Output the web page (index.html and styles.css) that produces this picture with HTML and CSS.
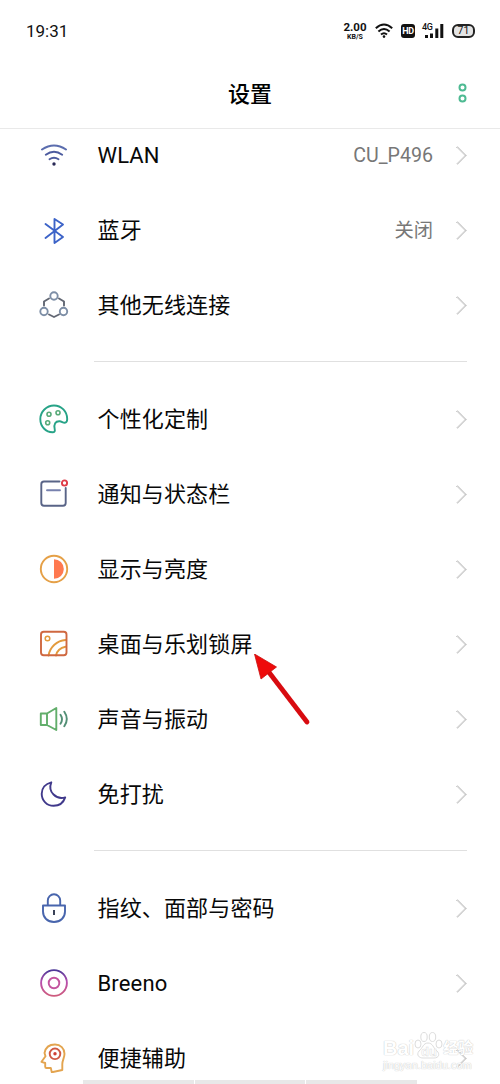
FILE: index.html
```html
<!DOCTYPE html>
<html lang="zh-CN">
<head>
<meta charset="utf-8">
<title>设置</title>
<link rel="stylesheet" href="styles.css">
</head>
<body>
<div class="phone">
  <div class="status">
    <span class="clock">19:31</span>
    <div class="speed"><b>2.00</b><small>KB/S</small></div>
    <svg class="s-wifi" width="18" height="16" viewBox="0 0 18 16" fill="none" stroke="#111" stroke-width="2"><path d="M.8 5.3Q9-2.2 17.2 5.3M3.4 8.6Q9 3.4 14.6 8.6M6 11.6Q9 9 12 11.6"/><circle cx="9" cy="13.6" r="1.3" fill="#111" stroke="none"/></svg>
    <span class="hd">HD</span>
    <div class="signal"><span>4G</span><svg width="21" height="15" viewBox="0 0 21 15" fill="#111"><path d="M2 12h3v3H2zM7 10.500h3v4.500H7zM12.300 5.500h3V15h-3zM17.300 1h3v14h-3z"/></svg></div>
    <span class="battery">71</span>
  </div>
  <header class="header">
    <h1>设置</h1>
    <svg class="more" width="10" height="20" viewBox="0 0 10 20" fill="none" stroke="#4dba92" stroke-width="2"><circle cx="5.500" cy="4.500" r="3"/><circle cx="5.500" cy="15.500" r="3"/></svg>
  </header>
  <main class="list">
    <section class="group">
      <div class="row"><svg class="icon" viewBox="0 0 30 30" stroke="#5b6dae"><path d="M3 8.500Q15 .5 27 8.500" stroke-width="2"/><path d="M6.800 13.700Q15 7.700 23.200 13.700M10.500 18.300Q15 15.300 19.500 18.300" stroke="#4c5b9f"/><circle cx="15" cy="23" r="1.700" fill="#292956" stroke="none"/></svg><span class="label">WLAN</span><span class="value">CU_P496</span><i class="arrow"></i></div>
      <div class="row"><svg class="icon" viewBox="0 0 30 30" stroke="#3c63c8"><path d="M6.500 8l17.500 13-8.500 6V3L24 8.500 6.500 22"/></svg><span class="label">蓝牙</span><span class="value zh">关闭</span><i class="arrow"></i></div>
      <div class="row"><svg class="icon" viewBox="0 0 30 30" stroke="#7d8ea6"><circle cx="15" cy="5" r="3.700"/><circle cx="5" cy="20.500" r="3.700"/><circle cx="24.500" cy="20.500" r="3.700"/><path d="M10 7.500l-5 3v4M20 7.500l5 3v4M10 23.500l5 2.500 5-2.500" stroke="#626773"/></svg><span class="label">其他无线连接</span><i class="arrow"></i></div>
    </section>
    <hr class="divider">
    <section class="group raised">
      <div class="row"><svg class="icon" viewBox="0 0 30 30" stroke="#27a387"><path d="M28.200 15C28.200 7.500 22.400 1.500 15 1.500S1.300 7.600 1.300 15c0 7.600 5.600 13.300 12.200 13.300 2.100 0 2.700-1.100 2.200-3.200-1.100-5 .6-8.200 5-7.900 2.200.2 3.700 2.100 5.600 1.500 1.500-.5 1.900-2 1.900-3.700z"/><g stroke="#58aa79" stroke-width="1.600"><circle cx="10" cy="10.300" r="2"/><circle cx="19" cy="8.700" r="2"/><circle cx="8.700" cy="18.700" r="2"/></g></svg><span class="label">个性化定制</span><i class="arrow"></i></div>
      <div class="row"><svg class="icon" viewBox="0 0 30 30" stroke="#596487"><path d="M20.500 2.500H5Q2.300 2.500 2.300 5.200V24q0 2.700 2.700 2.700h19q2.700 0 2.700-2.700V9"/><path d="M8 11.300h13" stroke="#7781ae"/><circle cx="25.500" cy="4" r="2.600" stroke="#df3c48"/></svg><span class="label">通知与状态栏</span><i class="arrow"></i></div>
      <div class="row"><svg class="icon" viewBox="0 0 30 30" stroke="#e5a047"><circle cx="15" cy="15" r="13.200"/><path d="M15 5.200a9.800 9.800 0 0 1 0 19.600z" fill="#ff7950" stroke="none"/></svg><span class="label">显示与亮度</span><i class="arrow"></i></div>
      <div class="row"><svg class="icon" viewBox="0 0 30 30" stroke="#e39a3c"><path d="M9.500 26.500C11 18 18 11.500 26.500 11M17 26.500c1-4.800 5-8 9.500-8.800"/><circle cx="8.500" cy="9.500" r="2.300" stroke-width="1.500"/><rect x="2" y="2.800" width="25.500" height="23.500" rx="2.700" stroke="#cf6840"/></svg><span class="label">桌面与乐划锁屏</span><i class="arrow"></i></div>
      <div class="row"><svg class="icon" viewBox="0 0 30 30" stroke="#62ae6b"><path d="M8 9.500l9.300-5.500v22L8 21zM8 9.500H1.800V21H8"/><path d="M21.500 10.800q3 4.500 0 9M25.300 7.800q5 7.200 0 14.400" stroke="#528f75"/></svg><span class="label">声音与振动</span><i class="arrow"></i></div>
      <div class="row"><svg class="icon" viewBox="0 0 30 30" stroke="#40398b"><path d="M12.300 3.300C6.500 4.700 2.700 9.200 2.700 14.800c0 6.800 5.200 12 11.900 12 5.500 0 9.900-3.300 11.600-8.400-8.600 2.700-17.800-5.300-13.900-15.100z"/></svg><span class="label">免打扰</span><i class="arrow"></i></div>
    </section>
    <hr class="divider">
    <section class="group raised">
      <div class="row"><svg class="icon" viewBox="0 0 30 30" stroke="#4865ad"><path d="M4 12.500h22v6c0 6-4.500 10.500-11 10.500s-11-4.500-11-10.500zM8.800 12V7.500a6.200 6.200 0 0 1 12.400 0V12"/><path d="M15 17v5" stroke="#30384f" stroke-linecap="butt"/></svg><span class="label">指纹、面部与密码</span><i class="arrow"></i></div>
      <div class="row"><svg class="icon" viewBox="0 0 30 30" stroke="url(#ring)"><defs><linearGradient id="ring" x1="0" y1="0" x2="0" y2="1"><stop stop-color="#4b3797"/><stop offset=".45" stop-color="#b74eae"/><stop offset="1" stop-color="#ce5b7d"/></linearGradient></defs><circle cx="15" cy="15" r="12.900"/><circle cx="15" cy="15" r="5.300" stroke="#c3559f"/></svg><span class="label">Breeno</span><i class="arrow"></i></div>
      <div class="row"><svg class="icon" viewBox="0 0 30 30" stroke="#e3a44f"><path d="M5.500 10C6.500 4.500 10.500 1.500 16 1.500c5.500 0 9.500 4 9.500 9.300 0 4-2.200 6.500-2.200 10.200V27l-10.500 2.300-1-4.300H7.500q-1.300 0-1.300-1.300V20l-3.700-1.200 4-5.500z"/><circle cx="16" cy="10.800" r="5.300" stroke="#cf5944"/><circle cx="16" cy="10.800" r="1.700" fill="#cf4036" stroke="none"/></svg><span class="label">便捷辅助</span><i class="arrow"></i></div>
    </section>
  </main>
  <svg class="pointer" width="60" height="75" viewBox="0 0 60 75"><path d="M15 17L54 68" stroke="#d80b10" stroke-width="4.800" stroke-linecap="round"/><path d="M1.500 0L23.500 13 8 25z" fill="#ee0b0b" stroke="#c9100f" stroke-width=".8"/></svg>
  <div class="watermark">
    <div class="brand">Bai<svg width="29" height="27" viewBox="0 0 29 27"><ellipse cx="4" cy="12" rx="3" ry="4"/><ellipse cx="10" cy="5" rx="3.200" ry="4.500"/><ellipse cx="18.500" cy="5" rx="3.200" ry="4.500"/><ellipse cx="25" cy="12" rx="3" ry="4"/><path d="M14 11c-5 0-5 5-9 8-3 4 0 7 4 7h11c5 0 6-4 3-7-4-3-4-8-9-8z"/><text x="7" y="24">du</text></svg><span>经验</span></div>
    <div class="site">jingyan.baidu.com</div>
  </div>
  <div class="navbar"><i></i><i></i><i></i></div>
</div>
</body>
</html>
```
FILE: styles.css
```css
* { box-sizing: border-box; }
body { margin: 0; background: #fff; font-family: Roboto, "Noto Sans CJK SC", sans-serif; color: #111; }
.phone { position: relative; width: 500px; height: 1084px; overflow: hidden; display: flex; flex-direction: column; background: #fff; }
.status { height: 60px; flex: none; display: flex; align-items: center; padding: 1px 25px 0 26px; }
.clock { font-size: 17px; margin-right: auto; }
.speed { width: 24px; display: flex; flex-direction: column; align-items: center; font-family: Roboto, sans-serif; }
.speed b { font-size: 11.5px; line-height: 12px; font-weight: 700; }
.speed small { font-size: 7px; line-height: 8px; font-weight: 700; }
.s-wifi { margin-left: 8px; }
.hd { margin-left: 8px; width: 14px; height: 14px; border-radius: 3px; background: #111; color: #fff; font-size: 9px; letter-spacing: -.3px; line-height: 14px; font-weight: 700; text-align: center; }
.signal { position: relative; margin-left: 8px; height: 15px; width: 21px; }
.signal svg { display: block; }
.signal span { position: absolute; left: -1px; top: 0; font-size: 9px; line-height: 9px; letter-spacing: -.4px; font-weight: 500; }
.battery { margin-left: 8px; width: 23px; height: 14px; border: 2px solid #222; border-radius: 6px; background: #e4e4e4; font-size: 10.5px; line-height: 10px; text-align: center; }
.header { position: relative; height: 69px; flex: none; border-bottom: 1px solid #e9e9e9; display: flex; justify-content: center; align-items: center; padding-top: 1px; }
.header h1 { margin: 0; font-size: 22px; line-height: 32px; font-weight: 500; color: #000; }
.more { position: absolute; left: 457px; top: 23px; }
.list { flex: 1; min-height: 0; overflow: hidden; }
.group:first-child { margin-top: -11px; }
.row { height: 75px; display: flex; align-items: center; padding: 0 32px 0 39px; }
.icon { width: 30px; height: 30px; flex: none; fill: none; stroke-width: 1.9; stroke-linecap: round; stroke-linejoin: round; }
.raised .icon { margin-bottom: 2px; }
.raised .arrow { margin-bottom: 1px; }
.label { margin-left: 28.5px; flex: 1; font-size: 22px; letter-spacing: .15px; line-height: 32px; color: #080808; }
.value { font-size: 19.6px; line-height: 30px; color: #777; }
.value.zh { font-size: 19.3px; }
.arrow { width: 13px; height: 13px; margin: 0 4px 0 18px; border: solid #c4c4c4; border-width: 1px 1px 0 0; box-shadow: inset -.5px .5px 0 #d0d0d0; transform: rotate(45deg); }
.divider { height: 1px; margin: 18px 33px 20px 94px; border: 0; background: #e0e0e0; }
.pointer { position: absolute; left: 253px; top: 654px; fill: none; }
.watermark { position: absolute; left: 383px; top: 1029px; width: 92px; color: #fff; text-shadow: 0 0 1px #ccc, 0 0 1px #ccc; font-family: "Liberation Sans", "Noto Sans CJK SC", sans-serif; }
.brand { height: 30px; display: flex; align-items: flex-end; font-size: 20px; line-height: 22px; font-weight: 700; }
.brand svg { fill: #fff; stroke: #ddd; stroke-width: 1; }
.brand text { font-size: 13px; stroke-width: .5; text-shadow: none; }
.brand span { font-size: 15px; }
.site { font-size: 11px; line-height: 12px; }
.navbar { position: absolute; left: 83px; bottom: 0; width: 334px; height: 4px; display: grid; grid-template-columns: repeat(3, 1fr); gap: 1px; }
.navbar i { background: #e8e8e8; }
```
